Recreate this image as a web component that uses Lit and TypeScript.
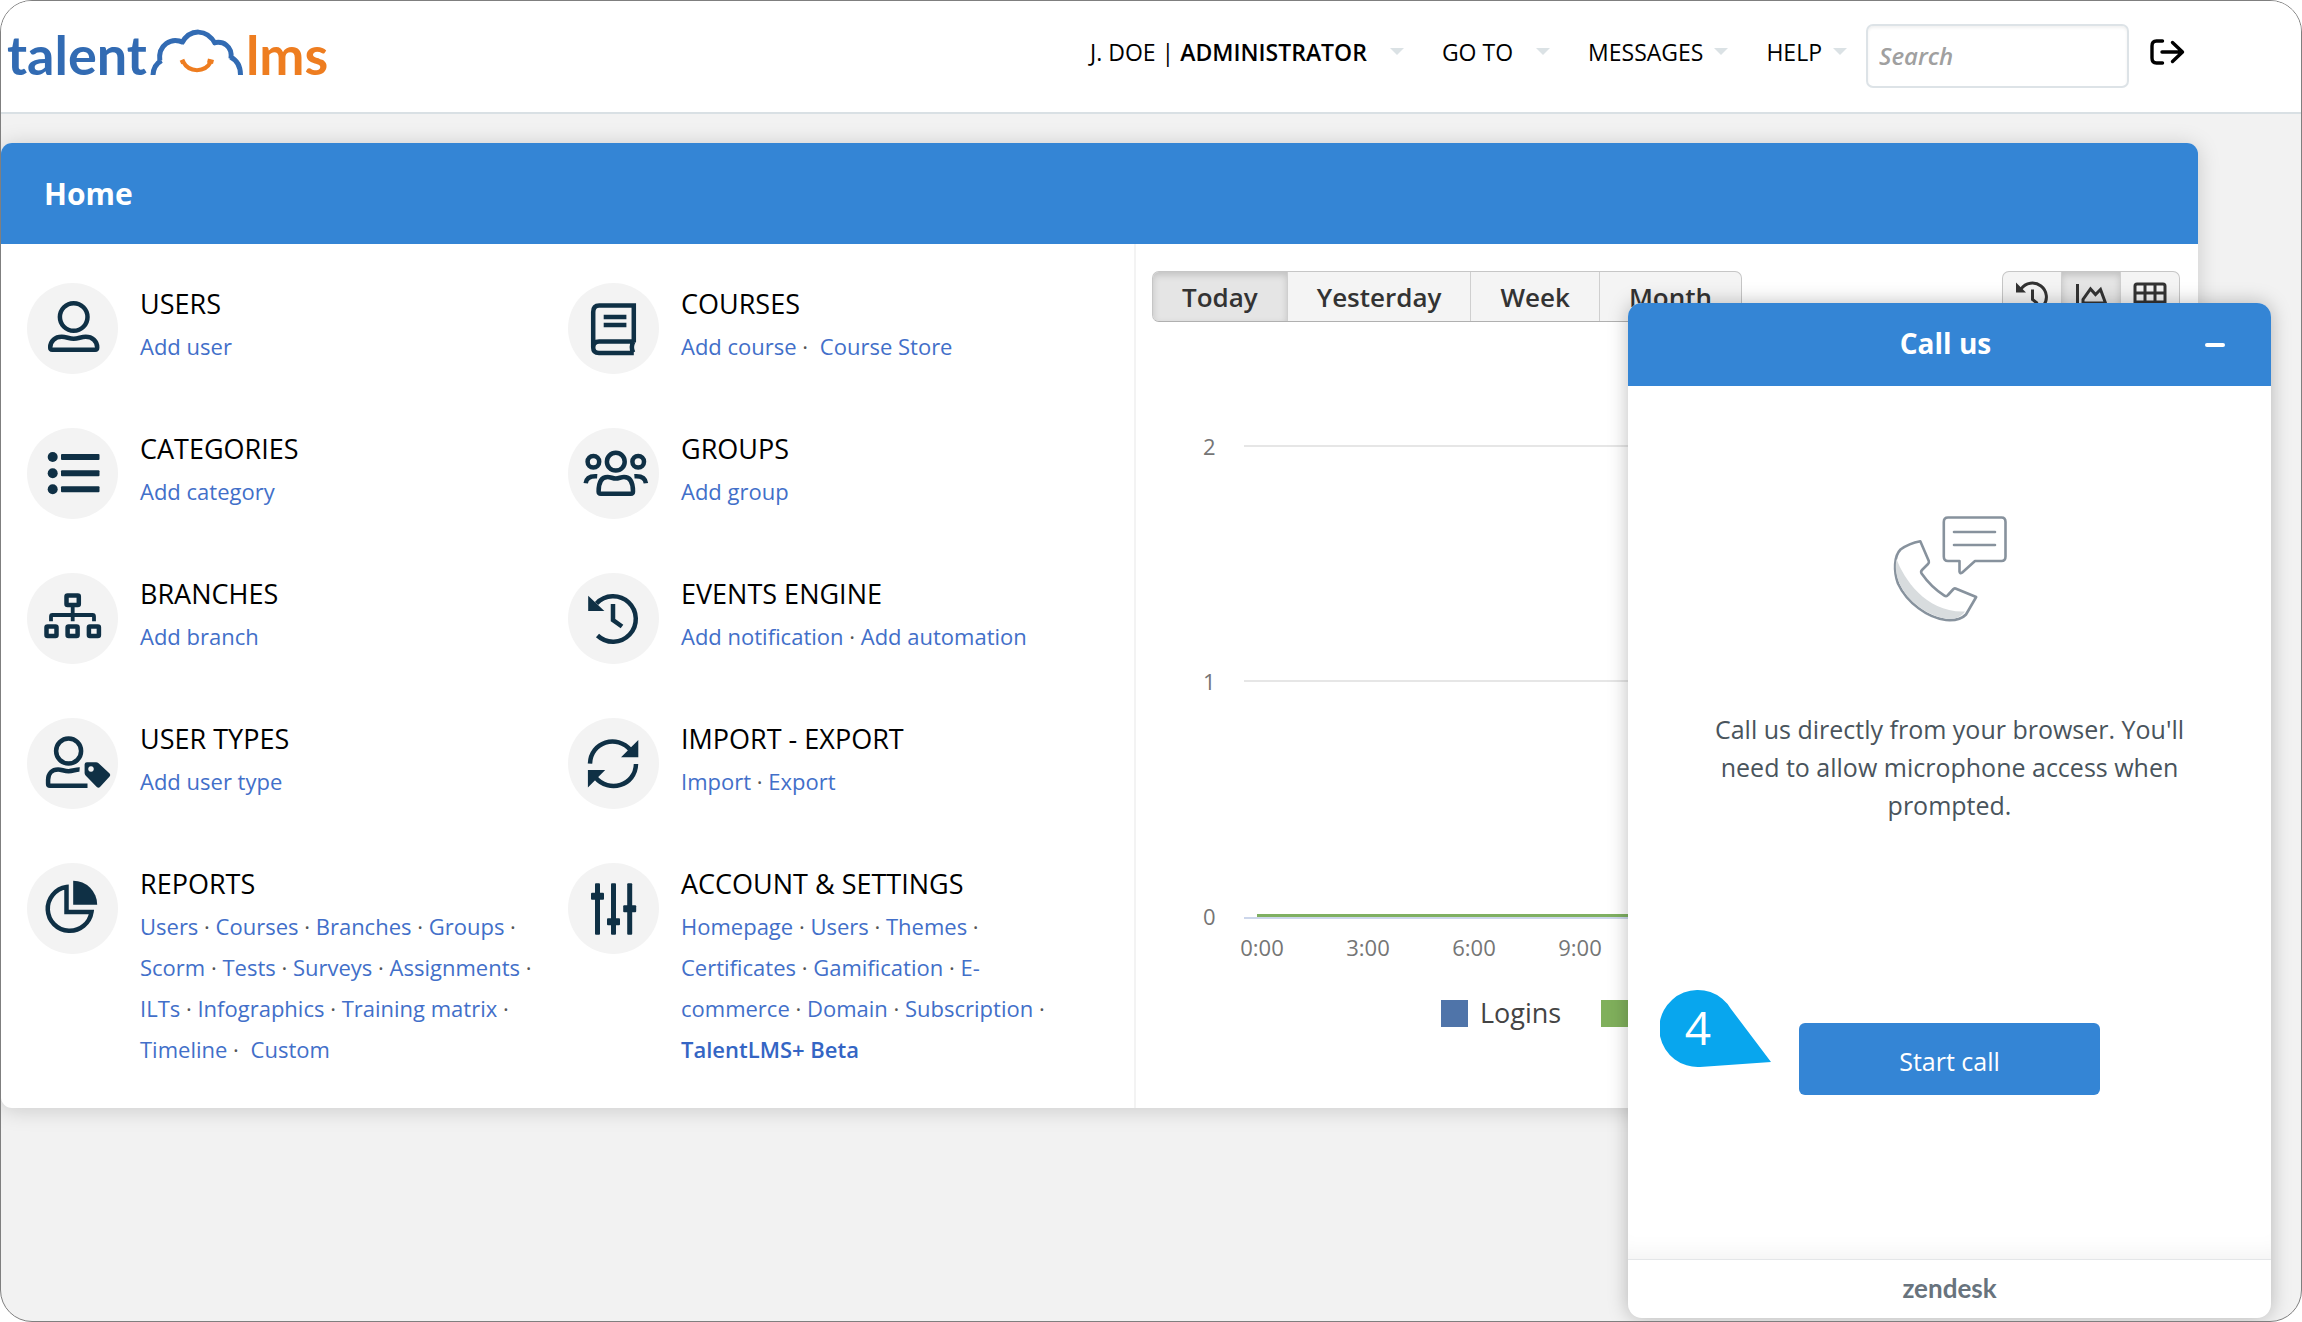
import { LitElement, html, svg, css, nothing } from "lit";
import type { TemplateResult, SVGTemplateResult } from "lit";
import { customElement, property } from "lit/decorators.js";
import { classMap } from "lit/directives/class-map.js";

const glyphs: Record<string, SVGTemplateResult> = {
  users: svg`
    <ellipse cx="46.7" cy="34" rx="13.8" ry="13.8"></ellipse>
    <path d="M23.2 64.5c0-6.500 5-10.700 11.500-10.700 4.500 0 7.500 1.900 12 1.900s7.500-1.900 12-1.900c6.500 0 11.500 4.200 11.500 10.700 0 1.400-.7 2.200-2 2.200H25.200c-1.300 0-2-.8-2-2.200z"></path>`,
  categories: svg`
    <g class="solid"><circle cx="25.700" cy="29" r="5"></circle><circle cx="25.700" cy="45.300" r="5"></circle><circle cx="25.700" cy="61.300" r="5"></circle>
    <rect x="34" y="26" width="38.500" height="6" rx="1"></rect><rect x="34" y="42.300" width="38.500" height="6" rx="1"></rect><rect x="34" y="58.300" width="38.500" height="6" rx="1"></rect></g>`,
  branches: svg`
    <rect x="39.500" y="22.500" width="12.300" height="9.500" rx="1"></rect>
    <path class="thin" d="M45.700 32v16.300M24 48.300V43.500q0-1.500 1.500-1.500h40q1.500 0 1.500 1.500v4.800"></path>
    <rect x="19.500" y="53.500" width="10" height="9.500" rx="1"></rect><rect x="40.600" y="53.500" width="10" height="9.500" rx="1"></rect><rect x="61.900" y="53.500" width="10" height="9.500" rx="1"></rect>`,
  userTypes: svg`
    <circle cx="41.600" cy="33" r="12.500"></circle>
    <path d="M52.600 51.600c-3.500-.3-6.500 1.600-11 1.600-4.500 0-7-1.800-10.500-1.800-6 0-10 4-10 10.400v4.200q0 1.800 2 1.800H60.500"></path>
    <path class="solid" fill-rule="evenodd" d="M57.600 46.500q0-2.200 2.200-2.200H69q1.500 0 2.600 1l11 10.300q1.400 1.400 0 2.900L73 69q-1.600 1.600-3.200 0L58.600 57.500q-1-1-1-2.400zM64 48.200a2.800 2.800 0 1 0 .01 0z"></path>`,
  reports: svg`
    <path d="M39.500 24A22 22 0 1 0 64.500 49H39.500z"></path>
    <path class="solid" d="M46.200 17.700A24 24 0 0 1 70.200 41.700H46.200z"></path>`,
  courses: svg`
    <path d="M65.800 70H31q-5.800 0-5.800-5.500V29q0-6.500 6-6.500H65.800V59.500M25.200 64.500q0-6 6-6H65.800M65.200 59q-2.800 5.500 0 10.500"></path>
    <path d="M35.700 34h22.700M35.700 42h22.700"></path>`,
  groups: svg`
    <circle cx="47.800" cy="33.700" r="8.900"></circle><circle cx="25.400" cy="33.700" r="5.800"></circle><circle cx="70.200" cy="33.700" r="5.800"></circle>
    <path d="M30.600 63.500c0-9 2.500-14.500 9-14.500 3.200 0 5 1.500 8.200 1.500s5-1.500 8.200-1.500c6.500 0 9 5.500 9 14.500q0 2.200-2.200 2.200H32.800q-2.200 0-2.200-2.200z"></path>
    <path d="M17.700 55.300c.6-5 4-7.600 11.500-7M77.900 55.300c-.6-5-4-7.600-11.500-7"></path>`,
  events: svg`
    <path d="M28.500 30.500A22.700 22.700 0 1 1 29.500 62.500"></path>
    <path class="solid" d="M20.200 22.700V38H36.400z"></path>
    <path d="M45 31V47L54 53.500"></path>`,
  transfer: svg`
    <path d="M22 45.600C22.500 24 49 15.500 63 32.500M68 46C67.500 67.500 41 76 27 59"></path>
    <path class="solid" d="M70.300 22V39.300H53zM19.900 69.600V52H37.200z"></path>`,
  settings: svg`
    <g class="solid"><rect x="27" y="20.300" width="5" height="51.400" rx="1"></rect><rect x="43" y="20.300" width="5" height="51.400" rx="1"></rect><rect x="59.200" y="20.300" width="5" height="51.400" rx="1"></rect>
    <rect x="23" y="29.700" width="13" height="7" rx="1"></rect><rect x="39" y="55.200" width="13" height="7" rx="1"></rect><rect x="55.200" y="42.200" width="13" height="7" rx="1"></rect></g>`,
};

interface Tile {
  icon: string;
  title: string;
  links: string[];
  wideLast?: boolean;
  boldLast?: boolean;
}

const tiles: Tile[] = [
  { icon: "users", title: "USERS", links: ["Add user"] },
  { icon: "courses", title: "COURSES", links: ["Add course", "Course Store"], wideLast: true },
  { icon: "categories", title: "CATEGORIES", links: ["Add category"] },
  { icon: "groups", title: "GROUPS", links: ["Add group"] },
  { icon: "branches", title: "BRANCHES", links: ["Add branch"] },
  { icon: "events", title: "EVENTS ENGINE", links: ["Add notification", "Add automation"] },
  { icon: "userTypes", title: "USER TYPES", links: ["Add user type"] },
  { icon: "transfer", title: "IMPORT - EXPORT", links: ["Import", "Export"] },
  {
    icon: "reports",
    title: "REPORTS",
    links: ["Users", "Courses", "Branches", "Groups", "Scorm", "Tests", "Surveys", "Assignments", "ILTs", "Infographics", "Training matrix", "Timeline", "Custom"],
    wideLast: true,
  },
  {
    icon: "settings",
    title: "ACCOUNT & SETTINGS",
    links: ["Homepage", "Users", "Themes", "Certificates", "Gamification", "E-commerce", "Domain", "Subscription", "TalentLMS+ Beta"],
    boldLast: true,
  },
];

@customElement("home-tile")
class HomeTile extends LitElement {
  @property({ attribute: false }) tile!: Tile;

  static styles = css`
    :host { display: flex; gap: 22px; }
    .badge { flex: none; width: 91px; height: 91px; border-radius: 50%; background: #f3f3f3; }
    .badge svg { display: block; width: 91px; height: 91px; fill: none; stroke: #0f3045; stroke-width: 4.500; }
    .badge .solid { fill: #0f3045; stroke: none; }
    .badge .thin { stroke-width: 3.800; }
    .text { flex: 1; padding: 1px 28px 0 0; }
    .title { margin: 0 0 2px; font-size: 27px; line-height: 40px; font-weight: 500; color: #000; }
    .links { margin: 0; font-size: 22px; line-height: 41px; color: #555; }
    a { color: #426fc9; text-decoration: none; }
    .bold { font-weight: 600; color: #3465c4; }
    .wide { margin-left: 6px; }
  `;

  render() {
    const { icon, title, links, wideLast, boldLast } = this.tile;
    return html`
      <span class="badge"><svg viewBox="0 0 91 91" aria-hidden="true">${glyphs[icon]}</svg></span>
      <div class="text">
        <h2 class="title">${title}</h2>
        <p class="links">${links.map((label, i) => {
          const last = i === links.length - 1;
          return html`${i ? " · " : nothing}<a href="#" class=${classMap({ wide: last && !!wideLast, bold: last && !!boldLast })}>${label}</a>`;
        })}</p>
      </div>`;
  }
}

@customElement("activity-chart")
class ActivityChart extends LitElement {
  static styles = css`
    :host { display: block; }
    .bar { display: flex; justify-content: space-between; }
    .group { display: flex; height: 51px; box-sizing: border-box; border: 1px solid #c6c6c6; border-bottom-color: #b0b0b0; border-radius: 7px; overflow: hidden; background: #f4f4f4; }
    .group button { font: 600 26px/36px "Open Sans", sans-serif; color: #333; background: none; border: 0; border-left: 1px solid #cfcfcf; margin: 0; padding: 0 29px; display: flex; align-items: center; }
    .group button:first-child { border-left: 0; }
    .group .on { background: #e5e5e5; box-shadow: inset 0 3px 7px rgba(0, 0, 0, 0.16); }
    .group.icons button { padding: 0 12px; }
    .icons svg { display: block; width: 34px; height: 34px; fill: none; stroke: #333; stroke-width: 3; }
    .icons .solid { fill: #333; stroke: none; }
    .plot { margin: 107px 10px 0 0; display: flex; flex-direction: column; gap: 201px; }
    .line { display: flex; align-items: center; height: 34px; }
    .value { flex: none; width: 92px; box-sizing: border-box; padding-left: 51px; font-size: 22px; line-height: 34px; color: #757575; }
    .rule { flex: 1; height: 2px; background: #e6e6e6; }
    .axis { background: #ccd6eb; background-clip: padding-box; border-top: 3px solid transparent; border-image: linear-gradient(90deg, transparent 16px, #7fb062 16px) 3; }
    .hours { display: flex; padding-left: 57px; font-size: 22px; line-height: 30px; color: #757575; margin-top: -1px; }
    .hours span { width: 106px; text-align: center; }
    .legend { display: flex; align-items: center; gap: 12px; padding-left: 289px; margin-top: 33px; font-size: 27px; line-height: 36px; color: #444; }
    .swatch { width: 27px; height: 27px; }
    .blue { background: #4f74a9; }
    .green { background: #80b05c; margin-left: 28px; }
  `;

  render(): TemplateResult {
    return html`
      <div class="bar">
        <div class="group">
          <button type="button" class="on">Today</button>
          <button type="button">Yesterday</button>
          <button type="button">Week</button>
          <button type="button">Month</button>
        </div>
        <div class="group icons">
          <button type="button" aria-label="Timeline">
            <svg viewBox="0 0 34 34" aria-hidden="true"><path d="M6 9A14 14 0 1 1 8 27.500M17.500 9.500v10l5 4"></path><path class="solid" d="M1 2.500V12.500H11z"></path></svg>
          </button>
          <button type="button" class="on" aria-label="Chart">
            <svg viewBox="0 0 34 34" aria-hidden="true"><path d="M3.500 4V30H33M9 23V19.500L16.500 9 21.500 14.500 26.500 9.500 31.500 23z"></path></svg>
          </button>
          <button type="button" aria-label="Table">
            <svg viewBox="0 0 34 34" aria-hidden="true"><rect x="2" y="4" width="30" height="26" rx="2"></rect><path d="M2 13H32M2 22H32M12 4V30M22 4V30"></path></svg>
          </button>
        </div>
      </div>
      <div class="plot">
        <div class="line"><span class="value">2</span><span class="rule"></span></div>
        <div class="line"><span class="value">1</span><span class="rule"></span></div>
        <div class="line"><span class="value">0</span><span class="rule axis"></span></div>
      </div>
      <div class="hours">${["0:00", "3:00", "6:00", "9:00"].map((h) => html`<span>${h}</span>`)}</div>
      <div class="legend"><span class="swatch blue"></span>Logins<span class="swatch green"></span></div>`;
  }
}

@customElement("call-widget")
class CallWidget extends LitElement {
  static styles = css`
    :host { display: flex; flex-direction: column; border-radius: 14px; overflow: hidden; background: #fff; box-shadow: 0 0 20px 0 rgba(0, 0, 0, 0.26); text-align: center; }
    .head { display: grid; grid-template-columns: 104px 1fr 112px; align-items: center; height: 83px; background: #3485d5; color: #fff; }
    .name { grid-column: 2; margin: 0; font-size: 28px; line-height: 36px; font-weight: 700; padding-bottom: 4px; }
    .min { background: none; border: 0; padding: 20px; justify-self: center; }
    .min i { display: block; width: 20px; height: 4px; border-radius: 2px; background: #fff; }
    .body { flex: 1; display: flex; flex-direction: column; align-items: center; box-shadow: inset 0 -24px 24px -20px rgba(0, 0, 0, 0.06); }
    .phone { width: 120px; height: 116px; margin-top: 123px; fill: #fff; stroke: #87929d; stroke-width: 2.600; stroke-linejoin: round; stroke-linecap: round; }
    .phone .shade { fill: #d8dcde; stroke: none; }
    .phone .open { fill: none; }
    .copy { margin: 85px 0 0; max-width: 500px; font-size: 25px; line-height: 38px; color: #49545c; }
    .start { width: 301px; height: 72px; margin-top: 199px; border: 0; border-radius: 6px; background: #3485d5; color: #fff; font: 400 25px/36px "Open Sans", sans-serif; padding: 4px 0 0; }
    .foot { border-top: 1px solid #e4e6e8; height: 58px; font: 700 26px/56px Lato, sans-serif; color: #68737d; }
  `;

  render() {
    return html`
      <header class="head">
        <h2 class="name">Call us</h2>
        <button class="min" type="button" aria-label="Minimize"><i></i></button>
      </header>
      <div class="body">
        <svg class="phone" viewBox="0 0 120 116" aria-hidden="true">
          <path d="M30.300 32.300Q19 34.500 10.500 40.500C4 47 3.500 62 8 74.500 17 94 38 109 56 111Q70 112 76 105.500L86.200 88 65.500 79.500Q64.500 79.200 63.500 80L58 86Q56.500 88 54 86.300 41 78 31.600 64.500 30.500 62.500 32 61L38 55Q39.300 53.800 38.800 52z"></path>
          <path class="shade" d="M6.500 50C14 70 36 104 75 102.500 70 109.500 63 110.500 56 109.500 38 107 18 93 9.500 74.500 5.500 65 5.200 57 6.500 50z"></path>
          <path d="M58 8.500H111.500Q115.500 8.500 115.500 13V47.500Q115.500 52 111.500 52H85L72 63.700Q69.800 65 69.500 62.500V52H58Q53.800 52 53.800 47.500V13Q53.800 8.500 58 8.500z"></path>
          <path class="open" d="M64 23H105M64 36H105"></path>
        </svg>
        <p class="copy">Call us directly from your browser. You'll need to allow microphone access when prompted.</p>
        <button class="start" type="button">Start call</button>
      </div>
      <footer class="foot">zendesk</footer>`;
  }
}

@customElement("app-root")
class AppRoot extends LitElement {
  static styles = css`
    :host { display: block; font-family: "Open Sans", sans-serif; background: #fff; }
    .frame { position: relative; box-sizing: border-box; min-height: 100vh; border: 1px solid #7f7f7f; border-radius: 32px; overflow: hidden; background: #f2f2f2; }
    .top { display: flex; justify-content: space-between; align-items: center; height: 111px; padding: 0 116px 0 6px; border-bottom: 2px solid #d9e0e4; background: #fff; }
    .brand { display: flex; align-items: center; font: 700 54px/64px Lato, sans-serif; color: #326bb3; text-decoration: none; padding-bottom: 3px; }
    .brand svg { width: 94px; height: 48px; margin: 0 2px 5px 3px; fill: none; stroke: #326bb3; stroke-width: 5; }
    .brand .smile { stroke: #ee7d20; stroke-width: 4; }
    .brand .lms { color: #ee7d20; }
    .menu { display: flex; align-items: center; padding-bottom: 2px; }
    .menu button { display: flex; align-items: center; background: none; border: 0; padding: 0 0 8px; margin: 0 38px 0 0; font: 400 23px/34px "Open Sans", sans-serif; color: #000; }
    .menu .last { margin-right: 19px; }
    .menu b { font-weight: 600; margin-left: 6px; }
    .caret { border: 7px solid transparent; border-top: 7px solid #dbe2e5; border-bottom: 0; margin-left: 11px; }
    .far { margin-left: 23px; }
    .search { box-sizing: border-box; width: 263px; height: 64px; padding: 0 11px; border: 2px solid #dde3e7; border-radius: 7px; box-shadow: inset 0 2px 3px rgba(0, 0, 0, 0.06); font: italic 600 24px/34px "Open Sans", sans-serif; color: #333; }
    .search::placeholder { color: #a0a0a0; opacity: 1; }
    .menu .out { margin: 0 0 0 21px; }
    .out svg { display: block; width: 35px; height: 28px; fill: none; stroke: #000; stroke-width: 3.400; stroke-linecap: round; stroke-linejoin: round; }
    .card { margin: 29px 103px 0 0; border-radius: 11px; background: #fff; box-shadow: 0 2px 22px rgba(0, 0, 0, 0.17); overflow: hidden; }
    .title { margin: 0; padding: 0 43px; background: #3485d5; color: #fff; font-size: 30px; line-height: 101px; font-weight: 700; }
    .content { display: grid; grid-template-columns: 1135fr 1062fr; }
    .tiles { display: grid; grid-template-columns: 1fr 1fr; align-content: start; row-gap: 54px; padding: 39px 25px 38px 26px; border-right: 2px solid #f3f3f3; }
    .stats { padding: 27px 18px 0 16px; }
    .call { position: absolute; right: 30px; top: 302px; bottom: 3px; width: 643px; }
    .callout { position: absolute; right: 527px; top: 988px; width: 114px; height: 80px; }
    .callout svg { position: absolute; inset: 0; fill: #08a6ee; }
    .callout span { position: relative; display: block; width: 76px; text-align: center; color: #fff; font-size: 46px; line-height: 76px; }
  `;

  private item(label: TemplateResult | string, far = false, last = false) {
    return html`<button type="button" class=${classMap({ last })}>${label}<i class=${classMap({ caret: true, far })}></i></button>`;
  }

  render() {
    return html`
      <div class="frame">
        <header class="top">
          <a class="brand" href="#" aria-label="talent lms">
            <span>talent</span>
            <svg viewBox="150 28 94 48" aria-hidden="true">
              <path d="M153 74Q153.500 64 161.500 59.500M159.800 59.500C158 44 171 35.500 183.500 41.500M181.500 42.500C190 27 207 27.500 215.500 43M213.500 42C223 39.500 232.500 45 231 57.500M230.500 56C236.500 59 240.500 65 240.500 74"></path>
              <path class="smile" d="M180.500 61.500L185 59.500M183 60.500C189 72 205 72 211 60.500M207.500 59.500L213.500 61"></path>
            </svg>
            <span class="lms">lms</span>
          </a>
          <nav class="menu">
            ${this.item(html`J. DOE | <b>ADMINISTRATOR</b>`, true)}
            ${this.item("GO TO", true)}
            ${this.item("MESSAGES")}
            ${this.item("HELP", false, true)}
            <input class="search" type="search" placeholder="Search" aria-label="Search" />
            <button type="button" class="out" aria-label="Log out">
              <svg viewBox="0 0 35 28" aria-hidden="true"><path d="M12.500 3H6.500Q2 3 2 8V20Q2 25 6.500 25H12.500M12 14H32M22.500 4.500L32.500 14 22.500 23.500"></path></svg>
            </button>
          </nav>
        </header>
        <main class="card">
          <h1 class="title">Home</h1>
          <div class="content">
            <div class="tiles">${tiles.map((t) => html`<home-tile .tile=${t}></home-tile>`)}</div>
            <activity-chart class="stats"></activity-chart>
          </div>
        </main>
        <call-widget class="call"></call-widget>
        <div class="callout">
          <svg width="114" height="80" viewBox="0 0 114 80" aria-hidden="true"><path d="M40 77.900A38.500 38.500 0 1 1 71 20L111 73z"></path></svg>
          <span>4</span>
        </div>
      </div>`;
  }
}
